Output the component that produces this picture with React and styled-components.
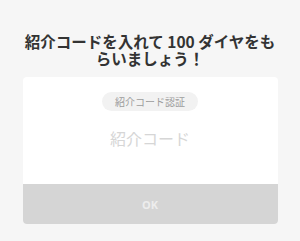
import styled, { createGlobalStyle } from "styled-components";

const GlobalStyle = createGlobalStyle`
  html, body {
    margin: 0;
    padding: 0;
    background: #f6f6f6;
  }
  body {
    font-family: "Noto Sans CJK JP", "Noto Sans", sans-serif;
  }
`;

const Page = styled.div`
  width: 300px;
  height: 241px;
  display: flex;
  flex-direction: column;
  align-items: center;
  padding-top: 33px;
  box-sizing: border-box;
`;

const Title = styled.h1`
  margin: 0;
  width: 258px;
  font-size: 15.5px;
  line-height: 17px;
  font-weight: 700;
  color: #333;
  text-align: center;
`;

const Card = styled.div`
  margin-top: 10px;
  width: 255px;
  background: #fff;
  border-radius: 4px;
  overflow: hidden;
  display: flex;
  flex-direction: column;
  align-items: center;
`;

const Badge = styled.div`
  margin-top: 15px;
  width: 96px;
  height: 19px;
  border-radius: 10px;
  background: #f2f2f2;
  color: #9c9c9c;
  font-size: 10px;
  line-height: 19px;
  text-align: center;
`;

const CodeInput = styled.input`
  margin: 11px 0 0;
  width: 200px;
  height: 30px;
  border: none;
  outline: none;
  background: transparent;
  text-align: center;
  font-family: inherit;
  font-size: 16px;
  color: #333;
  &::placeholder {
    color: #d6d6d6;
  }
`;

const OkButton = styled.button`
  margin-top: 30px;
  width: 100%;
  height: 40px;
  border: none;
  background: #d5d5d5;
  color: #ededed;
  font-family: "Noto Sans", sans-serif;
  font-weight: 700;
  font-size: 11px;
  cursor: pointer;
`;

export default function App() {
  return (
    <>
      <GlobalStyle />
      <Page>
        <Title>紹介コードを入れて 100 ダイヤをもらいましょう！</Title>
        <Card>
          <Badge>紹介コード認証</Badge>
          <CodeInput placeholder="紹介コード" />
          <OkButton>OK</OkButton>
        </Card>
      </Page>
    </>
  );
}
